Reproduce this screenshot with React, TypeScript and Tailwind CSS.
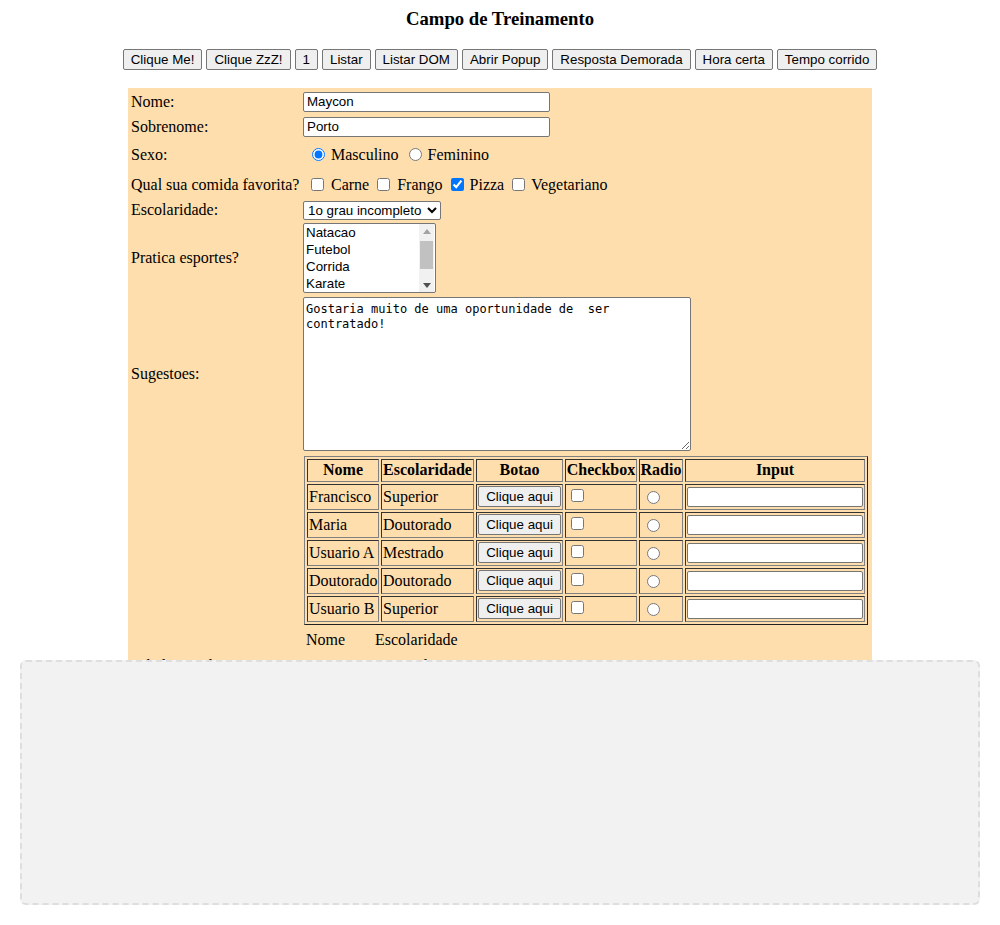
import React from "react";

const serif = "font-['Liberation_Serif','Times_New_Roman',serif]";
const sans = "font-['Liberation_Sans',Arial,sans-serif]";

const topButtons = [
  "Clique Me!",
  "Clique ZzZ!",
  "1",
  "Listar",
  "Listar DOM",
  "Abrir Popup",
  "Resposta Demorada",
  "Hora certa",
  "Tempo corrido",
];

const usuarios = [
  { nome: "Francisco", esc: "Superior" },
  { nome: "Maria", esc: "Doutorado" },
  { nome: "Usuario A", esc: "Mestrado" },
  { nome: "Doutorado", esc: "Doutorado" },
  { nome: "Usuario B", esc: "Superior" },
];

const esportes = ["Natacao", "Futebol", "Corrida", "Karate"];

function NativeButton({ children, className = "" }: { children: React.ReactNode; className?: string }) {
  return (
    <button
      type="button"
      className={`h-[21px] px-[7px] bg-[#efefef] border border-[#767676] rounded-[2px] text-[13.33px] leading-[15px] text-black ${sans} ${className}`}
    >
      {children}
    </button>
  );
}

function Row({ label, h, children }: { label?: string; h: string; children?: React.ReactNode }) {
  return (
    <div className={`flex items-center ${h}`}>
      <div className="w-[175px] pl-[3px] shrink-0">{label}</div>
      <div className="flex-1 flex items-center">{children}</div>
    </div>
  );
}

function Arrow({ up }: { up?: boolean }) {
  return (
    <div className="h-[14px] flex items-center justify-center">
      <svg width="8" height="5" viewBox="0 0 8 5">
        <path d={up ? "M0 5 L4 0 L8 5 Z" : "M0 0 L4 5 L8 0 Z"} fill={up ? "#a3a3a3" : "#505050"} />
      </svg>
    </div>
  );
}

const cell = "p-0 border border-[#333] border-r-[#808080] border-b-[#808080]";

export default function App() {
  return (
    <div className={`relative min-h-[925px] bg-white text-black ${serif} text-[16px]`}>
      {/* titulo */}
      <h3 className="pt-[8px] text-center text-[18.72px] font-bold leading-[22px]">Campo de Treinamento</h3>

      {/* barra de botoes */}
      <div className="mt-[19px] flex justify-center gap-[4px]">
        {topButtons.map((b) => (
          <NativeButton key={b}>{b}</NativeButton>
        ))}
      </div>

      {/* formulario */}
      <div className="mt-[18px] mx-auto w-[744px] bg-[#ffdead] pt-[1px] pb-[60px] leading-[18px]">
        <Row label="Nome:" h="h-[25px]">
          <input
            defaultValue="Maycon"
            className={`w-[247px] h-[20px] px-[3px] bg-white border border-[#767676] rounded-[2px] text-[13.33px] ${sans}`}
          />
        </Row>
        <Row label="Sobrenome:" h="h-[25px]">
          <input
            defaultValue="Porto"
            className={`w-[247px] h-[20px] px-[3px] bg-white border border-[#767676] rounded-[2px] text-[13.33px] ${sans}`}
          />
        </Row>
        <Row label="Sexo:" h="h-[31px]">
          <div className="flex items-center pl-[9px]">
            <input type="radio" name="sexo" defaultChecked className="m-0 w-[13px] h-[13px] accent-[#0075ff]" />
            <span className="ml-[6px]">Masculino</span>
            <input type="radio" name="sexo" className="m-0 ml-[10px] w-[13px] h-[13px]" />
            <span className="ml-[6px]">Feminino</span>
          </div>
        </Row>
        <Row label="Qual sua comida favorita?" h="h-[29px]">
          <div className="flex items-center pl-[8px]">
            <input type="checkbox" className="m-0 w-[13px] h-[13px]" />
            <span className="ml-[7px]">Carne</span>
            <input type="checkbox" className="m-0 ml-[8px] w-[13px] h-[13px]" />
            <span className="ml-[7px]">Frango</span>
            <input type="checkbox" defaultChecked className="m-0 ml-[8px] w-[13px] h-[13px] accent-[#0075ff]" />
            <span className="ml-[6px]">Pizza</span>
            <input type="checkbox" className="m-0 ml-[8px] w-[13px] h-[13px]" />
            <span className="ml-[6px]">Vegetariano</span>
          </div>
        </Row>
        <Row label="Escolaridade:" h="h-[22px]">
          <select
            defaultValue="1graui"
            className={`w-[138px] h-[19px] bg-white border border-[#767676] rounded-[2px] text-[13.33px] ${sans}`}
          >
            <option value="1graui">1o grau incompleto</option>
            <option value="1grauc">1o grau completo</option>
            <option value="2graui">2o grau incompleto</option>
            <option value="superior">Superior</option>
          </select>
        </Row>
        <Row label="Pratica esportes?" h="h-[74px]">
          {/* lista de selecao multipla com barra de rolagem */}
          <div
            role="listbox"
            aria-multiselectable="true"
            className={`flex w-[133px] h-[70px] bg-white border border-[#767676] rounded-[2px] text-[13.33px] leading-[17px] overflow-hidden ${sans}`}
          >
            <div className="flex-1 pl-[2px]">
              {esportes.map((e) => (
                <div key={e} role="option" className="h-[17px]">
                  {e}
                </div>
              ))}
            </div>
            <div className="w-[15px] bg-[#f1f1f1] flex flex-col mr-[1px]">
              <Arrow up />
              <div className="flex-1 px-[1px] pt-[3px]">
                <div className="h-[28px] bg-[#c1c1c1]" />
              </div>
              <Arrow />
            </div>
          </div>
        </Row>
        <Row label="Sugestoes:" h="h-[158px]">
          <textarea
            defaultValue={"Gostaria muito de uma oportunidade de  ser contratado!"}
            className="w-[388px] h-[154px] px-[2px] pt-[4px] pb-[2px] bg-white border border-[#767676] rounded-[2px] text-[12px] leading-[15px] font-['DejaVu_Sans_Mono','Liberation_Mono',monospace]"
          />
        </Row>
        <Row h="h-[174px]">
          <table className="border-separate border-spacing-[2px] border border-[#808080] border-r-[#222] border-b-[#222] ml-[1px]">
            <thead>
              <tr>
                {[
                  ["Nome", "w-[72px]"],
                  ["Escolaridade", "w-[93px]"],
                  ["Botao", "w-[87px]"],
                  ["Checkbox", "w-[72px]"],
                  ["Radio", "w-[44px]"],
                  ["Input", "w-[178px]"],
                ].map(([t, w]) => (
                  <th key={t} className={`${w} h-[23px] font-bold text-center ${cell}`}>
                    {t}
                  </th>
                ))}
              </tr>
            </thead>
            <tbody>
              {usuarios.map((u) => (
                <tr key={u.nome + u.esc}>
                  <td className={`h-[26px] pl-[1px] whitespace-nowrap ${cell}`}>{u.nome}</td>
                  <td className={`pl-[1px] whitespace-nowrap ${cell}`}>{u.esc}</td>
                  <td className={`pl-[1px] ${cell}`}>
                    <div className="flex">
                      <NativeButton className="w-[83px] h-[20px] px-0">Clique aqui</NativeButton>
                    </div>
                  </td>
                  <td className={cell}>
                    <div className="flex items-center pl-[5px] -mt-[2px]">
                      <input type="checkbox" className="m-0 w-[13px] h-[13px]" />
                    </div>
                  </td>
                  <td className={cell}>
                    <div className="flex items-center pl-[7px] mt-[2px]">
                      <input type="radio" name="tabela" className="m-0 w-[13px] h-[13px]" />
                    </div>
                  </td>
                  <td className={`px-[1px] ${cell}`}>
                    <input className="block w-[176px] h-[20px] px-[2px] bg-white border border-[#767676] rounded-[2px] text-[13.33px]" />
                  </td>
                </tr>
              ))}
            </tbody>
          </table>
        </Row>
        <Row h="h-[26px]">
          <div className="flex pl-[3px]">
            <span className="w-[69px]">Nome</span>
            <span>Escolaridade</span>
          </div>
        </Row>
        <Row label="Tabela para buscas:" h="h-[26px]">
          <div className="flex pl-[3px]">
            <span className="w-[69px] whitespace-nowrap">Usuario A</span>
            <span>Mestrado</span>
          </div>
        </Row>
        <Row h="h-[26px]">
          <div className="flex pl-[3px]">
            <span className="w-[69px]">Maria</span>
            <span>Doutorado</span>
          </div>
        </Row>
      </div>

      {/* area sobreposta */}
      <div className="absolute left-[20px] top-[660px] w-[960px] h-[245px] bg-[#f2f2f2] border-2 border-dashed border-[#dedede] rounded-[6px]" />
    </div>
  );
}
